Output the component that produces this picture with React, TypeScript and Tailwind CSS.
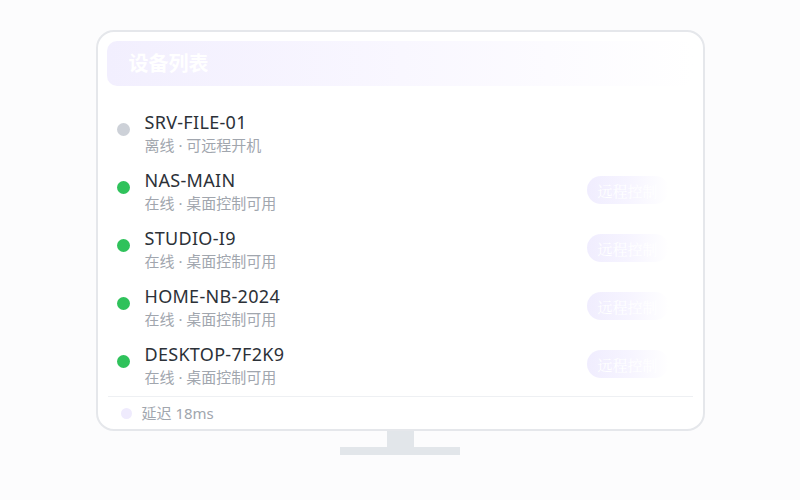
import React from "react";

type Device = { name: string; status: string; online: boolean };

const devices: Device[] = [
  { name: "SRV-FILE-01", status: "离线 · 可远程开机", online: false },
  { name: "NAS-MAIN", status: "在线 · 桌面控制可用", online: true },
  { name: "STUDIO-I9", status: "在线 · 桌面控制可用", online: true },
  { name: "HOME-NB-2024", status: "在线 · 桌面控制可用", online: true },
  { name: "DESKTOP-7F2K9", status: "在线 · 桌面控制可用", online: true },
];

export default function App() {
  return (
    <div
      className="w-[800px] h-[500px] bg-[#fcfcfd] flex flex-col items-center pt-[30px]"
      style={{ fontFamily: '"Noto Sans", "Noto Sans CJK SC", sans-serif' }}
    >
      <div className="w-[609px] h-[401px] border-2 border-[#e5e7eb] rounded-[18px] bg-white p-[9px] flex flex-col">
        <div className="h-[45px] shrink-0 rounded-[10px] bg-linear-to-r from-[#f2effe] via-[#f9f7ff] to-white flex items-center pl-[22px]">
          <span className="text-white text-[20px] font-bold leading-none">设备列表</span>
        </div>
        <div className="mt-[17px] flex flex-col">
          {devices.map((d) => (
            <div key={d.name} className="h-[58px] flex items-center pl-[10px] pr-[25px]">
              <div className="flex items-start flex-1">
                <div
                  className={
                    "w-[13px] h-[13px] rounded-full mt-[13px] shrink-0 " +
                    (d.online ? "bg-[#2fc25b]" : "bg-[#cdd1d8]")
                  }
                />
                <div className="ml-[15px] flex flex-col">
                  <span className="text-[18px] leading-[24px] tracking-[0.3px] text-[#2c3138]">{d.name}</span>
                  <span className="text-[15px] leading-[20px] mt-[1px] text-[#a1a6ae]">{d.status}</span>
                </div>
              </div>
              {d.online && (
                <div
                  className="w-[82px] h-[28px] rounded-full bg-linear-to-r from-[#f0edfe] via-[#f6f4ff] to-white flex items-center pl-[11px]"
                  style={{ fontFamily: '"Noto Serif CJK SC", "Liberation Serif", serif' }}
                >
                  <span className="text-white text-[15px] leading-none whitespace-nowrap">远程控制</span>
                </div>
              )}
            </div>
          ))}
        </div>
        <div className="mt-[3px] mx-[1px] border-t border-[#eef0f3]" />
        <div className="pt-[6px] flex items-center pl-[14px]">
          <div className="w-[11px] h-[11px] rounded-full bg-[#efebfd]" />
          <span className="ml-[10px] text-[15px] leading-[20px] text-[#a1a6ae]">延迟 18ms</span>
        </div>
      </div>
      <div className="w-[27px] h-[16px] bg-[#e2e6ea]" />
      <div className="w-[120px] h-[8px] bg-[#e2e6ea]" />
    </div>
  );
}
